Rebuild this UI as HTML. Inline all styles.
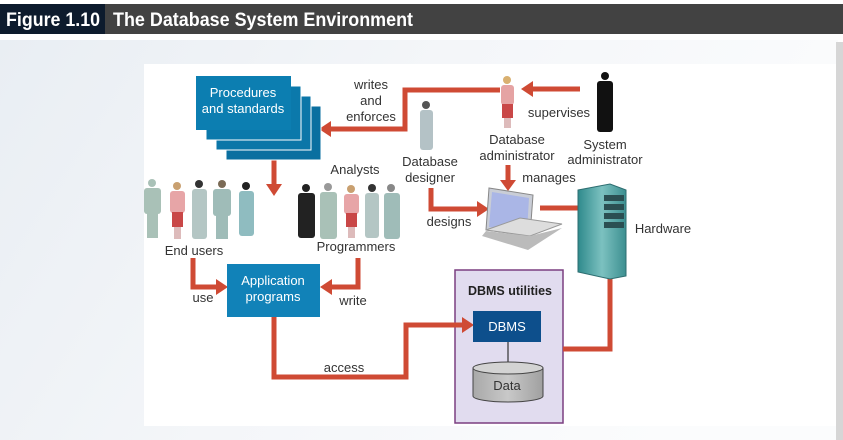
<!DOCTYPE html>
<html><head><meta charset="utf-8"><style>
html,body{margin:0;padding:0;width:843px;height:440px;overflow:hidden;background:#fff;font-family:"Liberation Sans",sans-serif}
</style></head><body>
<svg width="843" height="440" viewBox="0 0 843 440" xmlns="http://www.w3.org/2000/svg" font-family="Liberation Sans, sans-serif">
<defs>
<linearGradient id="bg" x1="0" y1="0" x2="1" y2="0.3">
<stop offset="0" stop-color="#e9eef3"/><stop offset="0.5" stop-color="#f4f6f9"/><stop offset="1" stop-color="#fbfcfd"/></linearGradient>
<linearGradient id="srv" x1="0" y1="0" x2="1" y2="0"><stop offset="0" stop-color="#2f8a8c"/><stop offset="0.5" stop-color="#7cc1c0"/><stop offset="1" stop-color="#3c8f90"/></linearGradient>
<linearGradient id="cyl" x1="0" y1="0" x2="1" y2="0"><stop offset="0" stop-color="#a9a9a9"/><stop offset="0.5" stop-color="#c8c8c8"/><stop offset="1" stop-color="#a0a0a0"/></linearGradient>
</defs>
<rect x="0" y="0" width="843" height="440" fill="#fff"/>
<rect x="0" y="40" width="838" height="400" fill="url(#bg)"/>
<rect x="836" y="42" width="7" height="398" fill="#d6d6d6"/>
<rect x="144" y="64" width="692" height="362" fill="#fff"/>
<!-- header -->
<rect x="0" y="4" width="843" height="30" fill="#424242"/>
<rect x="0" y="4" width="105" height="30" fill="#0d1b2d"/>
<text x="6" y="26" fill="#fff" font-size="19" font-weight="bold" textLength="94" lengthAdjust="spacingAndGlyphs">Figure 1.10</text>
<text x="113" y="26" fill="#fff" font-size="19" font-weight="bold" textLength="300" lengthAdjust="spacingAndGlyphs">The Database System Environment</text>

<!-- purple -->
<rect x="455" y="270" width="108" height="153" fill="#e1dcef" stroke="#7b3f80" stroke-width="1.5"/>
<text x="510" y="295" fill="#222" font-size="12.5" font-weight="bold" text-anchor="middle">DBMS utilities</text>

<g fill="none" stroke="#cf4a34" stroke-width="5">
<polyline points="327,129 405,129 405,90 500,90"/>
<line x1="580" y1="89" x2="530" y2="89"/>
<line x1="274" y1="160" x2="274" y2="185"/>
<line x1="508" y1="165" x2="508" y2="182"/>
<polyline points="431,188 431,209 480,209"/>
<line x1="540" y1="208" x2="580" y2="208"/>
<polyline points="193,258 193,287 220,287"/>
<polyline points="358,258 358,287 328,287"/>
<polyline points="274,317 274,377 406,377 406,325 465,325"/>
<polyline points="563,349 610,349 610,276"/>
</g>
<g fill="#cf4a34">
<polygon points="319,129 331,121 331,137"/>
<polygon points="521,89 533,81 533,97"/>
<polygon points="274,196 266,184 282,184"/>
<polygon points="508,191 500,180 516,180"/>
<polygon points="489,209 477,201 477,217"/>
<polygon points="228,287 216,279 216,295"/>
<polygon points="320,287 332,279 332,295"/>
<polygon points="474,325 462,317 462,333"/>
</g>
<!-- procedures -->
<g>
<rect x="226" y="106" width="95" height="54" fill="#0a6fa0" stroke="#fff" stroke-width="1"/>
<rect x="216" y="96" width="95" height="54" fill="#0b76a8" stroke="#fff" stroke-width="1"/>
<rect x="206" y="86" width="95" height="54" fill="#0b79ab" stroke="#fff" stroke-width="1"/>
<rect x="196" y="76" width="95" height="54" fill="#0c7eb1"/>
<text x="243" y="97" fill="#fff" font-size="13" text-anchor="middle">Procedures</text>
<text x="243" y="113" fill="#fff" font-size="13" text-anchor="middle">and standards</text>
</g>
<rect x="227" y="264" width="93" height="53" fill="#1182b8"/>
<text x="273" y="285" fill="#fff" font-size="13" text-anchor="middle">Application</text>
<text x="273" y="301" fill="#fff" font-size="13" text-anchor="middle">programs</text>
<rect x="473" y="311" width="68" height="31" fill="#0d4f8c"/>
<text x="507" y="331" fill="#fff" font-size="13" text-anchor="middle">DBMS</text>
<line x1="508" y1="342" x2="508" y2="362" stroke="#333" stroke-width="1.2"/>
<path d="M473,368 L473,396 A35,6 0 0 0 543,396 L543,368" fill="url(#cyl)" stroke="#444"/>
<ellipse cx="508" cy="368" rx="35" ry="6" fill="#d3d3d3" stroke="#444"/>
<text x="507" y="390" fill="#333" font-size="13" text-anchor="middle">Data</text>
<!-- laptop -->
<polygon points="489,188 533,195 530,236 486,230" fill="#c9cdd6" stroke="#888"/>
<polygon points="492,192 529,198 527,232 489,227" fill="#aab6e6"/>
<polygon points="486,230 530,236 562,224 520,218" fill="#ddd" stroke="#999"/>
<polygon points="482,236 528,250 562,228 530,236 486,231" fill="#bbb"/>
<!-- server -->
<polygon points="578,190 610,184 626,190 626,276 610,279 578,272" fill="url(#srv)" stroke="#2d6d70"/>
<rect x="604" y="195" width="20" height="6" fill="#2b4f52"/>
<rect x="604" y="204" width="20" height="6" fill="#2b4f52"/>
<rect x="604" y="213" width="20" height="6" fill="#2b4f52"/>
<rect x="604" y="222" width="20" height="6" fill="#2b4f52"/>
<g stroke="none">
<g fill="#a9c1b7"><circle cx="152" cy="183" r="4"/><rect x="144" y="188" width="17" height="26" rx="3"/><rect x="147" y="213" width="11" height="25"/></g>
<g><circle cx="177" cy="186" r="4" fill="#c9a070"/><rect x="170" y="191" width="15" height="22" rx="3" fill="#e7a5a7"/><rect x="172" y="212" width="11" height="15" fill="#c94747"/><rect x="174" y="227" width="7" height="12" fill="#dbb"/></g>
<g fill="#b4c6c4"><circle cx="199" cy="184" r="4" fill="#333"/><rect x="192" y="189" width="15" height="50" rx="3"/></g>
<g fill="#9fbcb8"><circle cx="222" cy="184" r="4" fill="#7a6a55"/><rect x="213" y="189" width="18" height="27" rx="3"/><rect x="216" y="215" width="12" height="24"/></g>
<g fill="#8fbcc0"><circle cx="246" cy="186" r="4" fill="#222"/><rect x="239" y="191" width="15" height="45" rx="3"/></g>
<g fill="#222"><circle cx="306" cy="188" r="4"/><rect x="298" y="193" width="17" height="45" rx="3"/></g>
<g fill="#a9c1b7"><circle cx="328" cy="187" r="4" fill="#999"/><rect x="320" y="192" width="17" height="47" rx="3"/></g>
<g><circle cx="351" cy="189" r="4" fill="#c9a070"/><rect x="344" y="194" width="15" height="20" rx="3" fill="#e7a5a7"/><rect x="346" y="213" width="11" height="14" fill="#c94747"/><rect x="348" y="227" width="7" height="11" fill="#dbb"/></g>
<g fill="#b4c6c4"><circle cx="372" cy="188" r="4" fill="#333"/><rect x="365" y="193" width="14" height="45" rx="3"/></g>
<g fill="#9fbcb8"><circle cx="391" cy="188" r="4" fill="#888"/><rect x="384" y="193" width="16" height="46" rx="3"/></g>
<g fill="#b4c2c6"><circle cx="426" cy="105" r="4" fill="#555"/><rect x="420" y="110" width="13" height="40" rx="3"/></g>
<g><circle cx="507" cy="80" r="4" fill="#d9b070"/><rect x="501" y="85" width="13" height="20" rx="3" fill="#e5a3a3"/><rect x="502" y="104" width="11" height="14" fill="#c94747"/><rect x="504" y="118" width="7" height="10" fill="#dbb"/></g>
<g fill="#111"><circle cx="605" cy="76" r="4"/><rect x="597" y="81" width="16" height="51" rx="3"/></g>
</g>
<g fill="#333" font-size="13" text-anchor="middle">
<text x="371" y="89">writes</text>
<text x="371" y="105">and</text>
<text x="371" y="121">enforces</text>
<text x="559" y="117">supervises</text>
<text x="517" y="144">Database</text>
<text x="517" y="160">administrator</text>
<text x="605" y="149">System</text>
<text x="605" y="164">administrator</text>
<text x="430" y="166">Database</text>
<text x="430" y="182">designer</text>
<text x="355" y="174">Analysts</text>
<text x="549" y="182">manages</text>
<text x="449" y="226">designs</text>
<text x="663" y="233">Hardware</text>
<text x="194" y="255">End users</text>
<text x="356" y="251">Programmers</text>
<text x="203" y="302">use</text>
<text x="353" y="305">write</text>
<text x="344" y="372">access</text>
</g>
</svg>
</body></html>
